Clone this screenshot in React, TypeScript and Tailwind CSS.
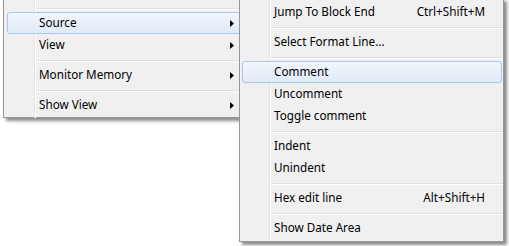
import React from "react";

type Entry =
  | { type: "item"; label: string; shortcut?: string; arrow?: boolean; hl?: boolean }
  | { type: "sep" };

function Arrow() {
  return (
    <svg width="4" height="7" viewBox="0 0 4 7" className="block">
      <polygon points="0,0 4,3.5 0,7" fill="#000" />
    </svg>
  );
}

function Menu({
  entries,
  gutter,
  ml,
  mr,
  pr,
  className,
}: {
  entries: Entry[];
  gutter: number;
  ml: string;
  mr: string;
  pr: string;
  className: string;
}) {
  return (
    <div
      className={
        "absolute bg-[#f0f0f0] border border-[#979797] pt-[2px] shadow-[3px_3px_3px_rgba(0,0,0,0.45)] font-['Segoe_UI','Noto_Sans',sans-serif] text-[11.7px] text-[#000] " +
        className
      }
    >
      <div className="relative flex flex-col">
        <div
          className="absolute top-[-2px] bottom-[-2px] w-[1px] bg-[#e2e3e3]"
          style={{ left: gutter }}
        />
        <div
          className="absolute top-[-2px] bottom-[-2px] w-[1px] bg-white"
          style={{ left: gutter + 1 }}
        />
        {entries.map((e, i) =>
          e.type === "sep" ? (
            <div key={i} className="relative h-[8px] flex flex-col pt-[4px]" style={{ paddingLeft: gutter + 2 }}>
              <div className="h-[1px] bg-[#e0e0e0]" />
              <div className="h-[1px] bg-white" />
            </div>
          ) : (
            <div
              key={i}
              className={
                "relative h-[22px] flex items-center pl-[31px] border rounded-[3px] " +
                ml +
                " " +
                mr +
                " " +
                pr +
                " " +
                (e.hl
                  ? "border-[#a8c8ee] bg-[linear-gradient(#f2f6fc,#e0eaf8)]"
                  : "border-transparent")
              }
            >
              <span className="whitespace-nowrap leading-none">{e.label}</span>
              {e.shortcut && (
                <span className="ml-auto whitespace-nowrap leading-none">{e.shortcut}</span>
              )}
              {e.arrow && (
                <span className="ml-auto">
                  <Arrow />
                </span>
              )}
            </div>
          )
        )}
      </div>
    </div>
  );
}

export default function App() {
  const left: Entry[] = [
    { type: "item", label: "" },
    { type: "sep" },
    { type: "item", label: "Source", arrow: true, hl: true },
    { type: "item", label: "View", arrow: true },
    { type: "sep" },
    { type: "item", label: "Monitor Memory", arrow: true },
    { type: "sep" },
    { type: "item", label: "Show View", arrow: true },
  ];
  const right: Entry[] = [
    { type: "item", label: "Jump To Block End", shortcut: "Ctrl+Shift+M" },
    { type: "sep" },
    { type: "item", label: "Select Format Line..." },
    { type: "sep" },
    { type: "item", label: "Comment", hl: true },
    { type: "item", label: "Uncomment" },
    { type: "item", label: "Toggle comment" },
    { type: "sep" },
    { type: "item", label: "Indent" },
    { type: "item", label: "Unindent" },
    { type: "sep" },
    { type: "item", label: "Hex edit line", shortcut: "Alt+Shift+H" },
    { type: "sep" },
    { type: "item", label: "Show Date Area" },
  ];
  return (
    <div className="relative w-[509px] h-[246px] bg-white overflow-hidden">
      <Menu
        entries={left}
        gutter={30}
        ml="ml-[3px]"
        mr="mr-[2px]"
        pr="pr-[6px]"
        className="left-[3px] top-[-21px] w-[241px] pb-[1px]"
      />
      <Menu
        entries={right}
        gutter={29}
        ml="ml-[2px]"
        mr="mr-[1px]"
        pr="pr-[16px]"
        className="left-[239px] top-[-2px] w-[265px] pb-[2px]"
      />
    </div>
  );
}
